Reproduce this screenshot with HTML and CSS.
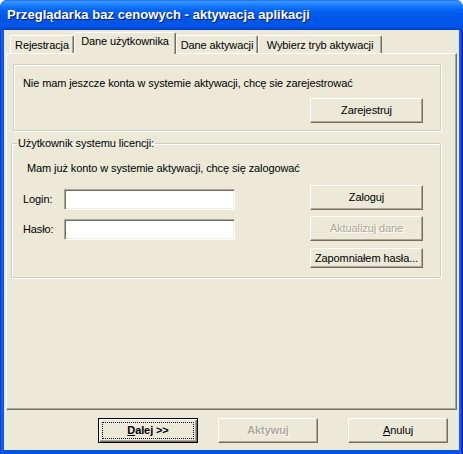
FILE: index.html
```html
<!DOCTYPE html>
<html lang="pl">
<head>
<meta charset="utf-8">
<title>Przeglądarka baz cenowych - aktywacja aplikacji</title>
<link rel="stylesheet" href="styles.css">
</head>
<body>
<div class="window">
  <div class="titlebar"><span class="title">Przeglądarka baz cenowych - aktywacja aplikacji</span></div>
  <div class="frame">
    <div class="client">
      <div class="tabs">
        <div class="tab tab-1">Rejestracja</div>
        <div class="tab tab-2 active">Dane użytkownika</div>
        <div class="tab tab-3">Dane aktywacji</div>
        <div class="tab tab-4">Wybierz tryb aktywacji</div>
      </div>
      <div class="panel">
        <div class="group group-register">
          <p class="group-text">Nie mam jeszcze konta w systemie aktywacji, chcę sie zarejestrować</p>
          <div class="register-row"><button class="btn btn-wide">Zarejestruj</button></div>
        </div>
        <fieldset class="group group-login">
          <legend>Użytkownik systemu licencji:</legend>
          <p class="intro">Mam już konto w systemie aktywacji, chcę się zalogować</p>
          <div class="login-body">
            <div class="fields">
              <div class="field"><label class="field-label">Login:</label><span class="input"></span></div>
              <div class="field"><label class="field-label">Hasło:</label><span class="input"></span></div>
            </div>
            <div class="side-buttons">
              <button class="btn btn-wide">Zaloguj</button>
              <button class="btn btn-wide disabled">Aktualizuj dane</button>
              <button class="btn btn-wide btn-short">Zapomniałem hasła...</button>
            </div>
          </div>
        </fieldset>
      </div>
      <div class="actions">
        <button class="btn btn-action btn-default"><span class="focus"><u>D</u>alej &gt;&gt;</span></button>
        <button class="btn btn-action disabled bold">Aktywuj</button>
        <button class="btn btn-action btn-last"><u>A</u>nuluj</button>
      </div>
    </div>
  </div>
</div>
</body>
</html>
```
FILE: styles.css
```css
* { box-sizing: border-box; }
html, body { margin: 0; padding: 0; }
body {
  font-family: "Liberation Sans", Arial, sans-serif;
  font-size: 11px;
  letter-spacing: -0.1px;
  color: #000;
  background: #fff;
}

.window {
  width: 463px;
  height: 454px;
  display: flex;
  flex-direction: column;
  background: #0855DD;
  border-radius: 7px 7px 0 0;
  overflow: hidden;
}

.titlebar {
  height: 30px;
  flex: none;
  display: flex;
  align-items: center;
  padding: 0 0 1px 7px;
  background: linear-gradient(to bottom,
    #0A5CE0 0px, #3E96FF 1px, #2F8CFF 3px, #1479FC 6px,
    #0765F2 10px, #0058E8 15px, #0055E5 22px, #0058EC 26px,
    #004ADB 28px, #0040C8 30px);
}
.title {
  color: #fff;
  font-weight: bold;
  font-size: 13px;
  letter-spacing: 0.05px;
  text-shadow: 1px 1px 0 #0A1883;
}

.frame {
  flex: 1;
  display: flex;
  padding: 0 4px 4px;
  background: linear-gradient(to right, #0019CF 0, #0A5CE8 1px, #166AEE 2px, #0855DD 3px, #0855DD 459px, #166AEE 460px, #0A5CE8 461px, #0019CF 462px);
}

.client {
  flex: 1;
  display: flex;
  flex-direction: column;
  background: #ECE9D8;
  padding: 2px 2px 0;
}

/* tabs */
.tabs {
  display: flex;
  align-items: flex-end;
  height: 21px;
  padding-left: 4px;
  position: relative;
  z-index: 1;
}
.tab {
  height: 18px;
  padding-top: 3px;
  text-align: center;
  line-height: 13px;
  white-space: nowrap;
  border-top: 1px solid #fff;
  border-left: 1px solid #fff;
  border-right: 1px solid #716F64;
  box-shadow: inset -1px 0 0 #ACA899;
  border-radius: 2px 2px 0 0;
}
.tab-1 { width: 64px; }
.tab-2 { width: 102px; }
.tab-3 { width: 82px; }
.tab-4 { width: 124px; }
.tab.active {
  height: 22px;
  margin-bottom: -1px;
  padding-top: 2px;
  background: #ECE9D8;
}

.panel {
  height: 357px;
  flex: none;
  border-top: 1px solid #fff;
  border-left: 1px solid #fff;
  border-right: 1px solid #716F64;
  border-bottom: 1px solid #716F64;
  box-shadow: inset -1px -1px 0 #ACA899;
  padding: 10px 0 0 6px;
}

.group {
  border: 1px solid #D0D0BF;
  box-shadow: inset 1px 1px 0 #fff, 1px 1px 0 #fff;
  border-radius: 1px;
}
.group-register {
  width: 428px;
  padding: 12px 17px 7px 9px;
}
.group-text { margin: 0; line-height: 13px; }
.register-row {
  display: flex;
  justify-content: flex-end;
  margin-top: 8px;
}

.group-login {
  width: 430px;
  margin: 6px 0 0 -2px;
  padding: 0 17px 9px 11px;
  min-width: 0;
}
.group-login legend {
  padding: 0 1px;
  margin-left: -6px;
  line-height: 13px;
}
.intro {
  margin: 12px 0 0 4px;
  line-height: 13px;
}
.login-body {
  display: flex;
  justify-content: space-between;
  margin-top: 10px;
}
.fields {
  display: flex;
  flex-direction: column;
  gap: 9px;
  padding-top: 4px;
}
.field {
  display: flex;
  align-items: center;
}
.field-label {
  width: 41px;
  line-height: 13px;
}
.input {
  display: block;
  width: 171px;
  height: 21px;
  background: #fff;
  border-top: 1px solid #ACA899;
  border-left: 1px solid #ACA899;
  border-right: 1px solid #fff;
  border-bottom: 1px solid #fff;
  box-shadow: inset 1px 1px 0 #716F64, inset -1px -1px 0 #F1EFE2;
}
.side-buttons {
  display: flex;
  flex-direction: column;
  gap: 6px;
}

/* buttons */
.btn {
  font-family: inherit;
  font-size: 11px;
  letter-spacing: inherit;
  color: #000;
  background: #ECE9D8;
  height: 25px;
  padding: 0;
  margin: 0;
  border-top: 1px solid #fff;
  border-left: 1px solid #fff;
  border-right: 1px solid #716F64;
  border-bottom: 1px solid #716F64;
  box-shadow: inset -1px -1px 0 #ACA899;
  border-radius: 0;
  line-height: 13px;
  display: flex;
  align-items: center;
  justify-content: center;
}
.btn-wide { width: 113px; }
.btn-short { height: 20px; margin-top: 1px; }
.btn.disabled {
  color: #ACA899;
  text-shadow: 1px 1px 0 #fff;
}
.btn.bold { font-weight: bold; }

.actions {
  display: flex;
  justify-content: flex-end;
  gap: 20px;
  margin-top: 8px;
  padding-right: 9px;
}
.btn-action { width: 100px; }
.btn-last { margin-left: 10px; }
.btn-default {
  border: 1px solid #000;
  box-shadow: inset 1px 1px 0 #fff, inset -1px -1px 0 #716F64, inset -2px -2px 0 #ACA899;
  font-weight: bold;
  padding: 3px;
}
.focus {
  flex: 1;
  align-self: stretch;
  display: flex;
  align-items: center;
  justify-content: center;
  border: 1px dotted #000;
}
```
